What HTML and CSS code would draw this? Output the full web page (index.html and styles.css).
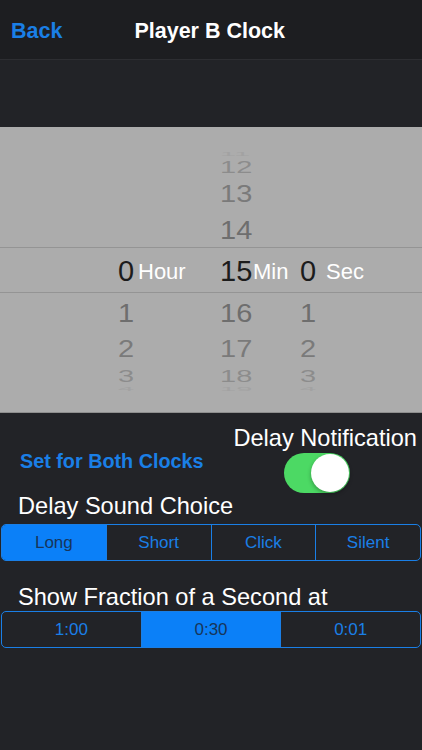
FILE: index.html
```html
<!DOCTYPE html>
<html lang="en">
<head>
    <meta charset="UTF-8">
    <meta name="viewport" content="width=device-width, initial-scale=1.0">
    <title>Player B Clock</title>
    <link rel="stylesheet" href="styles.css">
</head>
<body>
    <div class="navbar">
        <span class="back">Back</span>
        <span class="title">Player B Clock</span>
    </div>
    <div class="spacer"></div>

    <div class="picker">
        <div class="wheel hour">
            <div class="row r4"></div>
            <div class="row r3"></div>
            <div class="row r2"></div>
            <div class="row r1"></div>
            <div class="row sel"><span class="num">0</span><span class="unit">Hour</span></div>
            <div class="row r1"><span class="num">1</span></div>
            <div class="row r2"><span class="num">2</span></div>
            <div class="row r3"><span class="num">3</span></div>
            <div class="row r4"><span class="num">4</span></div>
        </div>
        <div class="wheel min">
            <div class="row r4"><span class="num">11</span></div>
            <div class="row r3"><span class="num">12</span></div>
            <div class="row r2"><span class="num">13</span></div>
            <div class="row r1"><span class="num">14</span></div>
            <div class="row sel"><span class="num">15</span><span class="unit">Min</span></div>
            <div class="row r1"><span class="num">16</span></div>
            <div class="row r2"><span class="num">17</span></div>
            <div class="row r3"><span class="num">18</span></div>
            <div class="row r4"><span class="num">19</span></div>
        </div>
        <div class="wheel sec">
            <div class="row r4"></div>
            <div class="row r3"></div>
            <div class="row r2"></div>
            <div class="row r1"></div>
            <div class="row sel"><span class="num">0</span><span class="unit">Sec</span></div>
            <div class="row r1"><span class="num">1</span></div>
            <div class="row r2"><span class="num">2</span></div>
            <div class="row r3"><span class="num">3</span></div>
            <div class="row r4"><span class="num">4</span></div>
        </div>
    </div>

    <div class="settings">
        <div class="top-row">
            <div class="both">Set for Both Clocks</div>
            <div class="notify">
                <div class="label">Delay Notification</div>
                <div class="switch on"><div class="knob"></div></div>
            </div>
        </div>

        <div class="label">Delay Sound Choice</div>
        <div class="segmented">
            <div class="seg active">Long</div>
            <div class="seg">Short</div>
            <div class="seg">Click</div>
            <div class="seg">Silent</div>
        </div>

        <div class="label fraction">Show Fraction of a Second at</div>
        <div class="segmented">
            <div class="seg">1:00</div>
            <div class="seg active">0:30</div>
            <div class="seg">0:01</div>
        </div>
    </div>
</body>
</html>
```

FILE: styles.css
```css
body {
    margin: 0;
    width: 422px;
    height: 750px;
    overflow: hidden;
    background-color: #222327;
    font-family: 'Liberation Sans', Arial, sans-serif;
    color: #fff;
}

.navbar {
    height: 55px;
    padding-top: 4px;
    background-color: #1d1e21;
    border-bottom: 1px solid #2d2e32;
    display: flex;
    align-items: center;
}

.back {
    margin-left: 11px;
    font-size: 21.5px;
    font-weight: bold;
    color: #1a7fe6;
}

.title {
    margin-left: 72px;
    font-size: 21.5px;
    font-weight: bold;
    color: #fff;
}

.spacer {
    height: 67px;
}

/* time picker */
.picker {
    height: 281px;
    padding-top: 4px;
    background-color: #acacac;
    display: flex;
    padding-left: 118px;
    border-bottom: 1px solid #8e8e8e;
    background-image: linear-gradient(#949494, #949494), linear-gradient(#949494, #949494);
    background-size: 100% 1px, 100% 1px;
    background-position: 0 120px, 0 165px;
    background-repeat: no-repeat;
}

.wheel {
    display: flex;
    flex-direction: column;
    justify-content: center;
}

.wheel.hour { width: 102px; }
.wheel.min { width: 80px; }
.wheel.sec { flex: 1; }

.row {
    display: flex;
    align-items: center;
    font-size: 29px;
    line-height: 1;
}

.num {
    display: inline-block;
}

.hour .num { width: 20px; }
.min .num { width: 33px; }
.sec .num { width: 26px; }

.sel { height: 45px; color: #1c1c1c; }
.r1 { height: 38px; color: #6e6e6e; transform: scaleY(0.92); }
.r2 { height: 34px; color: #7a7a7a; transform: scaleY(0.82); }
.r3 { height: 20px; color: #8c8c8c; transform: scaleY(0.55); }
.r4 { height: 6px; color: #a2a2a2; transform: scaleY(0.18); }

.unit {
    font-size: 22px;
    color: #fff;
}

/* settings */
.settings {
    padding-top: 12px;
}

.label {
    font-size: 23.6px;
    line-height: 27px;
    color: #fff;
    padding-left: 18px;
}

.top-row {
    display: flex;
    justify-content: space-between;
}

.both {
    padding-left: 20px;
    padding-top: 24px;
    font-size: 19.8px;
    line-height: 24px;
    font-weight: bold;
    color: #1a7fe6;
}

.notify {
    display: flex;
    flex-direction: column;
    align-items: flex-end;
    padding-right: 5px;
}

.notify .label {
    padding-left: 0;
}

.switch {
    width: 66px;
    height: 40px;
    border-radius: 20px;
    margin-top: 1px;
    margin-right: 67px;
    background-color: #e5e5e5;
    position: relative;
}

.switch.on {
    background-color: #4cd964;
}

.knob {
    position: absolute;
    top: 1px;
    right: 1px;
    width: 38px;
    height: 38px;
    border-radius: 50%;
    background: #fff;
    box-shadow: 0 2px 4px rgba(0,0,0,0.3);
}

.segmented {
    display: flex;
    margin: 4px 1px 0 1px;
    height: 35px;
    border: 1px solid #1a7fe6;
    border-radius: 5px;
    overflow: hidden;
}

.seg {
    flex: 1;
    display: flex;
    align-items: center;
    justify-content: center;
    font-size: 17px;
    color: #1a7fe6;
    border-left: 1px solid #1a7fe6;
}

.seg:first-child {
    border-left: none;
}

.seg.active {
    background-color: #0b80f8;
    color: #17355a;
}

.fraction {
    margin-top: 23px;
}

.fraction + .segmented {
    margin-top: 0;
}
```
